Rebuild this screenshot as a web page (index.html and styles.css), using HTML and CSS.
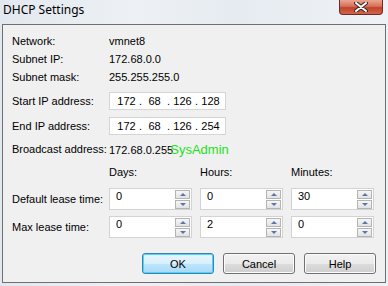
FILE: index.html
```html
<html>

<head>
    <link rel="stylesheet" href="styles.css">
</head>

<body>
    <div class="window">
        <div class="titlebar">
            <div class="title">DHCP Settings</div>
            <div class="close">
                <svg width="14" height="10" viewBox="0 0 14 10">
                    <path d="M2 1 L12 9 M12 1 L2 9" stroke="#3a2a2a" stroke-width="4" stroke-linecap="round"/>
                    <path d="M2 1 L12 9 M12 1 L2 9" stroke="#ffffff" stroke-width="2" stroke-linecap="round"/>
                </svg>
            </div>
        </div>

        <div class="panel">
            <div class="row text first">
                <div>Network:</div>
                <div class="value">vmnet8</div>
            </div>
            <div class="row text">
                <div>Subnet IP:</div>
                <div class="value">172.68.0.0</div>
            </div>
            <div class="row text">
                <div>Subnet mask:</div>
                <div class="value">255.255.255.0</div>
            </div>
            <div class="row ip-row start">
                <div>Start IP address:</div>
                <div class="ip">
                    <span class="oct">172</span><span class="dot">.</span><span class="oct">68</span><span class="dot">.</span><span class="oct">126</span><span class="dot">.</span><span class="oct">128</span>
                </div>
            </div>
            <div class="row ip-row">
                <div>End IP address:</div>
                <div class="ip">
                    <span class="oct">172</span><span class="dot">.</span><span class="oct">68</span><span class="dot">.</span><span class="oct">126</span><span class="dot">.</span><span class="oct">254</span>
                </div>
            </div>
            <div class="row text broadcast">
                <div>Broadcast address:</div>
                <div class="value">172.68.0.255<span class="watermark">SysAdmin</span></div>
            </div>
            <div class="row text heads">
                <div></div>
                <div>Days:</div>
                <div>Hours:</div>
                <div>Minutes:</div>
            </div>
            <div class="row spin-row">
                <div>Default lease time:</div>
                <div class="spin"><span>0</span><div class="arrows"><div class="up"></div><div class="down"></div></div></div>
                <div class="spin"><span>0</span><div class="arrows"><div class="up"></div><div class="down"></div></div></div>
                <div class="spin"><span>30</span><div class="arrows"><div class="up"></div><div class="down"></div></div></div>
            </div>
            <div class="row spin-row second">
                <div>Max lease time:</div>
                <div class="spin"><span>0</span><div class="arrows"><div class="up"></div><div class="down"></div></div></div>
                <div class="spin"><span>2</span><div class="arrows"><div class="up"></div><div class="down"></div></div></div>
                <div class="spin"><span>0</span><div class="arrows"><div class="up"></div><div class="down"></div></div></div>
            </div>
            <div class="buttons">
                <div class="btn default">OK</div>
                <div class="btn">Cancel</div>
                <div class="btn">Help</div>
            </div>
        </div>
    </div>
</body>

</html>
```

FILE: styles.css
```css
* {
    margin: 0;
    padding: 0;
    box-sizing: border-box;
}

body {
    width: 388px;
    height: 286px;
    overflow: hidden;
    background-color: #dfe5ec;
    font-family: "Liberation Sans", Arial, sans-serif;
    font-size: 11px;
    color: #000;
}

.window {
    width: 388px;
    height: 286px;
    background: linear-gradient(90deg, #e2e8ef 0%, #edf1f5 35%, #e6ebf1 60%, #eef2f6 100%);
    padding: 0 2px 3px 2px;
}

.titlebar {
    height: 24px;
    display: flex;
    justify-content: space-between;
    align-items: flex-start;
}

.title {
    font-family: "Noto Sans", "Open Sans", sans-serif;
    font-size: 12px;
    padding: 1px 0 0 1px;
    line-height: 18px;
}

.close {
    width: 44px;
    height: 15px;
    margin-right: 3px;
    border: 1px solid #6e2a22;
    border-top: none;
    border-radius: 0 0 4px 4px;
    background: linear-gradient(#e9a792 0%, #d77058 45%, #c0432b 55%, #d0664c 100%);
    display: flex;
    justify-content: center;
    align-items: center;
}

.panel {
    height: 259px;
    border: 1px solid #6f6f6f;
    background-color: #f0f0f0;
    padding: 7px 0 0 9px;
}

.row {
    display: grid;
    grid-template-columns: 89px 83px 83px 83px;
    column-gap: 8px;
    align-items: center;
    white-space: nowrap;
}

.row.text {
    height: 18px;
}

.value {
    grid-column: 2 / 5;
}

.ip-row {
    height: 18px;
    margin-top: 6px;
}

.ip-row + .ip-row {
    margin-top: 7px;
}

.ip {
    grid-column: 2 / 4;
    width: 117px;
    height: 18px;
    background-color: #fff;
    border: 1px solid #d5d5d5;
    display: flex;
    align-items: center;
    padding-left: 7px;
}

.oct {
    width: 19px;
    text-align: center;
}

.dot {
    width: 9px;
    text-align: center;
}

.broadcast {
    margin-top: 5px;
}

.watermark {
    color: #1ee01e;
    font-size: 13px;
    margin-left: -3px;
}

.heads {
    margin-top: 5px;
}

.spin-row {
    height: 22px;
    margin-top: 7px;
}

.spin-row.second {
    margin-top: 6px;
}

.spin {
    height: 22px;
    background-color: #fff;
    border: 1px solid #d3d3d3;
    display: flex;
    justify-content: space-between;
    padding: 1px 1px 0 6px;
}

.arrows {
    display: flex;
    flex-direction: column;
    gap: 1px;
}

.up, .down {
    width: 15px;
    height: 9px;
    border: 1px solid #b4b4b4;
    background: linear-gradient(#f6f6f6, #e2e2e2);
    display: flex;
    justify-content: center;
    align-items: center;
}

.up::after {
    content: "";
    border-left: 3px solid transparent;
    border-right: 3px solid transparent;
    border-bottom: 3px solid #5b76a8;
}

.down::after {
    content: "";
    border-left: 3px solid transparent;
    border-right: 3px solid transparent;
    border-top: 3px solid #5b76a8;
}

.buttons {
    display: flex;
    justify-content: flex-end;
    gap: 9px;
    margin-top: 15px;
    padding-right: 9px;
}

.btn {
    width: 72px;
    height: 21px;
    border: 1px solid #707070;
    border-radius: 3px;
    background: linear-gradient(#f2f2f2 0%, #ebebeb 50%, #dddddd 51%, #cfcfcf 100%);
    display: flex;
    justify-content: center;
    align-items: center;
    box-shadow: inset 0 0 0 1px #fcfcfc;
}

.btn.default {
    border-color: #3c7fb1;
    background: linear-gradient(#e8f5fc 0%, #d9f0fc 50%, #bee6fd 51%, #a7d9f5 100%);
    box-shadow: inset 0 0 0 1px #48d8fb;
}
```
